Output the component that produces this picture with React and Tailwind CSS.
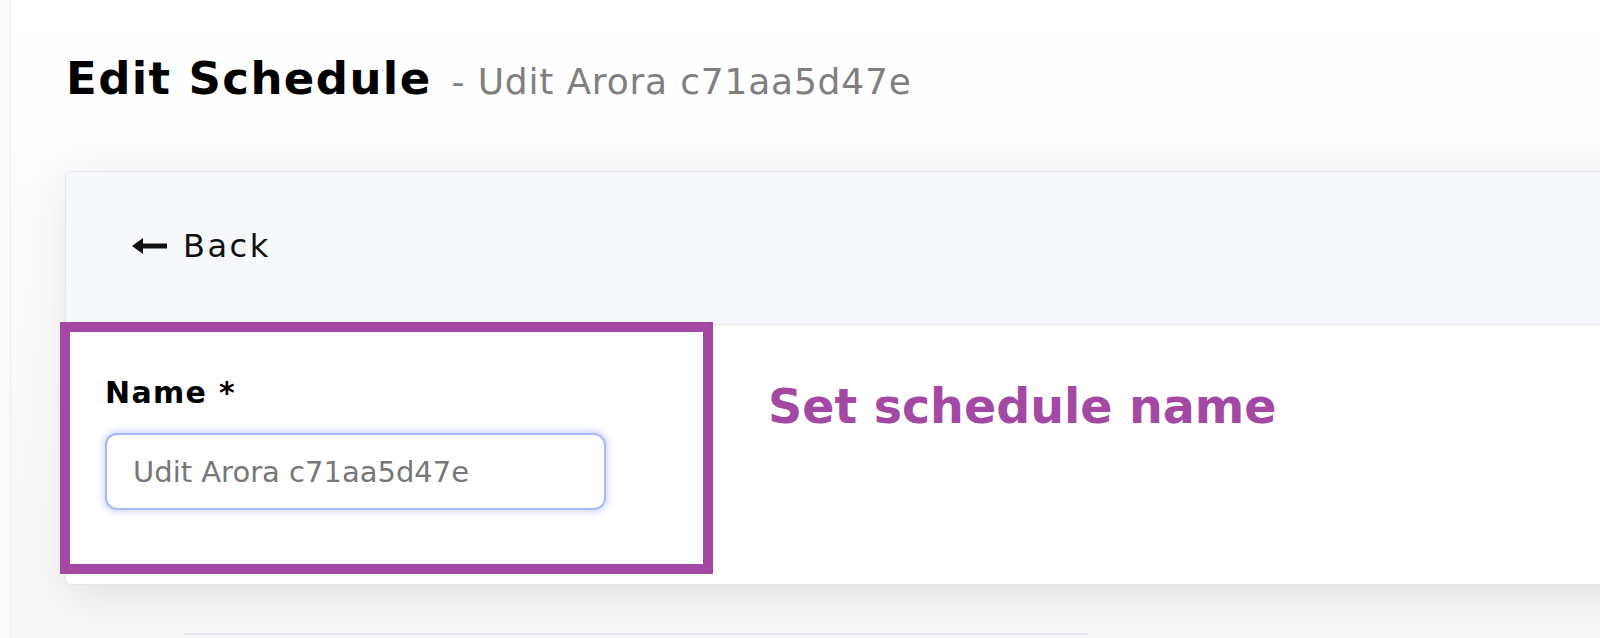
import React from "react";

const BackArrow = () => (
  <svg width="36" height="16" viewBox="0 0 36 16" className="shrink-0">
    <path d="M0 8 L11 0 L11 5.5 L35 5.5 L35 10.5 L11 10.5 L11 16 Z" fill="#111" />
  </svg>
);

const App = () => {
  return (
    <div className="relative h-[638px] w-[1600px] overflow-hidden bg-[#fbfbfb] font-['DejaVu_Sans','Liberation_Sans',sans-serif]">
      <div className="h-full ml-[10px] border-l border-[#efefef] bg-gradient-to-b from-white to-[#f7f7f7]">
        <div className="pl-[55px] pt-[53px] flex items-baseline gap-[20px]">
          <h1 className="text-[45px] leading-[52px] font-bold text-black tracking-[1.4px]">Edit Schedule</h1>
          <span className="text-[36px] leading-[52px] tracking-[0.8px] text-[#7f7f7f]">- Udit Arora c71aa5d47e</span>
        </div>

        <div className="relative mt-[63px] ml-[54px] w-[1600px] bg-white border border-[#e3e6ef] rounded-md shadow-[0_10px_45px_rgba(0,0,0,0.09)]">
          <div className="h-[153px] bg-[#f7f8fc] border-b border-[#e3e6ef] pl-[66px] pt-[54px] rounded-t-md">
            <button className="flex items-center gap-[15px] text-[32px] leading-[40px] tracking-[2.5px] text-[#111]">
              <BackArrow />
              <span>Back</span>
            </button>
          </div>

          <div className="h-[259px] flex">
            <div className="w-[702px] pl-[39px] pt-[50px]">
              <label className="block text-[30px] leading-[36px] font-bold tracking-[1.3px] text-black">Name *</label>
              <input
                className="mt-[22px] w-[501px] h-[77px] rounded-[12px] border-2 border-[#a9b8fb] shadow-[0_0_6px_2px_rgba(129,140,248,0.35)] bg-white px-[26px] text-[29px] outline-none placeholder:text-[#777]"
                placeholder="Udit Arora c71aa5d47e"
              />
            </div>
            <div className="pt-[54px]">
              <h2 className="text-[47.5px] leading-[56px] font-bold text-[#a349a4]">Set schedule name</h2>
            </div>
          </div>

          <div className="absolute left-[-6px] top-[150px] w-[653px] h-[252px] border-[10px] border-[#a349a4] pointer-events-none" />
        </div>

        <div className="ml-[173px] mt-[48px] w-[904px] border-t-2 border-[#e3e6ef]" />
      </div>
    </div>
  );
};

export default App;
